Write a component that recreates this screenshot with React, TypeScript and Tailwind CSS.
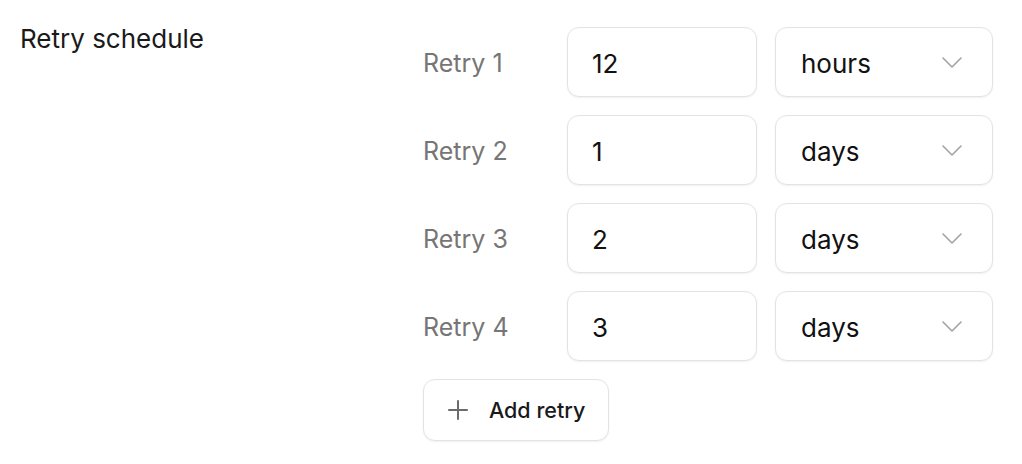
import { useState } from "react";

type Retry = { id: number; value: string; unit: string };

const initialRetries: Retry[] = [
    { id: 1, value: "12", unit: "hours" },
    { id: 2, value: "1", unit: "days" },
    { id: 3, value: "2", unit: "days" },
    { id: 4, value: "3", unit: "days" },
];

function Chevron() {
    return (
        <svg width="20" height="11" viewBox="0 0 20 11" fill="none" className="text-[#a3a3a3]">
            <path d="M1 1l9 9 9-9" stroke="currentColor" strokeWidth="1.6" strokeLinecap="round" strokeLinejoin="round" />
        </svg>
    );
}

function PlusIcon() {
    return (
        <svg width="20" height="20" viewBox="0 0 20 20" fill="none" className="text-[#6b6b6b]">
            <path d="M1 10h18M10 1v18" stroke="currentColor" strokeWidth="2" strokeLinecap="round" />
        </svg>
    );
}

export default function App() {
    const [retries, setRetries] = useState<Retry[]>(initialRetries);

    const update = (id: number, patch: Partial<Retry>) =>
        setRetries((rs) => rs.map((r) => (r.id === id ? { ...r, ...patch } : r)));

    return (
        <div className="flex min-h-screen bg-white pl-5 font-['Inter',sans-serif]">
            <div className="w-[403px] pt-[21px]">
                <h2 className="text-[26px] leading-9 font-normal text-[#1a1a1a]">Retry schedule</h2>
            </div>

            <div className="flex flex-col gap-[18px] pt-[27px]">
                {retries.map((retry) => (
                    <div key={retry.id} className="flex items-center">
                        <div className="w-[144px] pt-[4px] text-[25px] text-[#767676]">Retry {retry.id}</div>
                        <input
                            value={retry.value}
                            onChange={(e) => update(retry.id, { value: e.target.value })}
                            className="h-[70px] w-[190px] rounded-[12px] border border-[#e3e3e3] bg-white px-6 pt-[2px] text-[26px] text-[#111111] shadow-[0_1px_2px_rgba(0,0,0,0.06)] outline-none"
                        />
                        <div className="relative ml-[18px]">
                            <select
                                value={retry.unit}
                                onChange={(e) => update(retry.id, { unit: e.target.value })}
                                className="h-[70px] w-[218px] appearance-none rounded-[12px] border border-[#e3e3e3] bg-white pt-[2px] pl-[25px] text-[26px] text-[#111111] shadow-[0_1px_2px_rgba(0,0,0,0.06)] outline-none"
                            >
                                <option value="minutes">minutes</option>
                                <option value="hours">hours</option>
                                <option value="days">days</option>
                            </select>
                            <span className="pointer-events-none absolute top-[30px] right-[31px] flex">
                                <Chevron />
                            </span>
                        </div>
                    </div>
                ))}

                <div>
                    <button
                        onClick={() =>
                            setRetries((rs) => [...rs, { id: rs.length + 1, value: "1", unit: "days" }])
                        }
                        className="flex h-[62px] items-center gap-[21px] rounded-[12px] border border-[#e3e3e3] bg-white pr-[23px] pl-[24px] text-[21.5px] font-medium text-[#1a1a1a] shadow-[0_1px_2px_rgba(0,0,0,0.06)]"
                    >
                        <PlusIcon />
                        Add retry
                    </button>
                </div>
            </div>
        </div>
    );
}
